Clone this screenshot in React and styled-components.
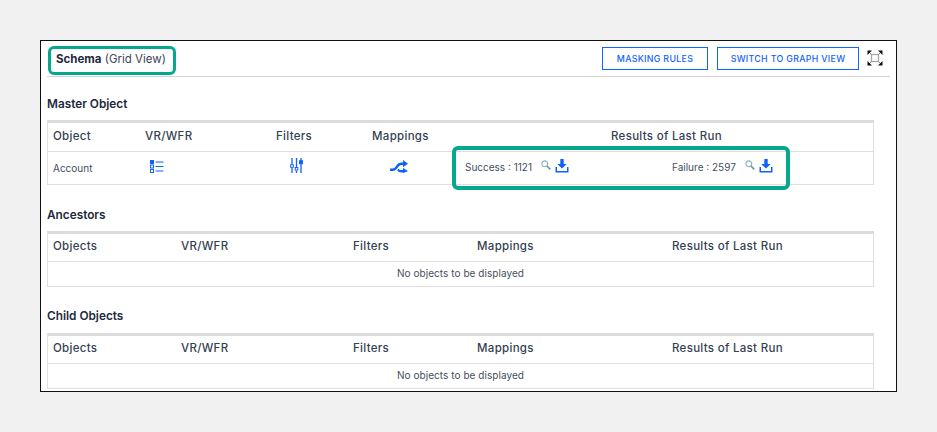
import React from "react";
import styled, { createGlobalStyle } from "styled-components";

const GlobalStyle = createGlobalStyle`
  html, body {
    margin: 0;
    padding: 0;
    background: #f1f1f1;
    font-family: "Inter", "Liberation Sans", sans-serif;
  }
`;

const Page = styled.div`
  width: 937px;
  height: 432px;
  padding: 40px 40px 0;
  box-sizing: border-box;
`;

const Frame = styled.div`
  position: relative;
  width: 857px;
  height: 352px;
  box-sizing: border-box;
  background: #fff;
  border: 1px solid #111;
  padding: 0 6px;
`;

const Header = styled.div`
  display: flex;
  align-items: center;
  justify-content: space-between;
  height: 36px;
  box-sizing: border-box;
  border-bottom: 1px solid #d4d4d4;
`;

const Heading = styled.div`
  font-size: 11.5px;
  font-weight: 400;
  color: #3a4658;
  padding-left: 9px;
  padding-top: 1px;
  b {
    font-weight: 700;
    color: #1e2a3c;
  }
`;

const Actions = styled.div`
  display: flex;
  align-items: center;
  margin-right: 7px;
  margin-bottom: 1px;
`;

const OutlineButton = styled.button`
  height: 23px;
  width: ${({ $w }) => $w}px;
  margin-right: ${({ $mr }) => $mr}px;
  padding: 0;
  border: 1px solid #0f62fe;
  background: #fff;
  color: #0f62fe;
  font-family: inherit;
  font-size: 8.8px;
  font-weight: 500;
  letter-spacing: 0.33px;
  white-space: nowrap;
`;

const SectionTitle = styled.h3`
  margin: 0;
  padding-top: ${({ $top }) => $top}px;
  height: 15px;
  line-height: 15px;
  font-size: 11.8px;
  font-weight: 600;
  color: #1e2a3c;
  box-sizing: content-box;
`;

const Table = styled.div`
  width: 827px;
  margin-top: ${({ $top }) => $top}px;
  box-sizing: border-box;
  border: 1px solid #dfdfdf;
  border-top: 3px solid #dcdcdc;
`;

const Row = styled.div`
  display: grid;
  grid-template-columns: ${({ $cols }) => $cols};
  height: ${({ $h }) => $h}px;
  align-items: center;
  box-sizing: border-box;
  border-bottom: ${({ $last }) => ($last ? "none" : "1px solid #dfdfdf")};
`;

const Th = styled.div`
  font-size: 11.5px;
  font-weight: 500;
  color: #333f52;
  letter-spacing: 0.3px;
  padding-left: ${({ $pl }) => $pl || 0}px;
  padding-bottom: 3px;
  white-space: nowrap;
`;

const Td = styled.div`
  font-size: 10px;
  color: #454f5e;
  display: flex;
  align-items: center;
  padding-left: ${({ $pl }) => $pl || 0}px;
  padding-bottom: ${({ $pb }) => $pb || 0}px;
`;

const Empty = styled.div`
  height: 24px;
  line-height: 23px;
  text-align: center;
  font-size: 10px;
  letter-spacing: 0.05px;
  color: #454f5e;
`;

const ResultCell = styled.div`
  display: grid;
  grid-template-columns: 207px 1fr;
  padding-left: 12px;
  padding-bottom: 3px;
`;

const Stat = styled.div`
  display: flex;
  align-items: center;
  font-size: 10px;
  color: #454f5e;
  white-space: nowrap;
  svg:first-of-type {
    margin-left: 9px;
    margin-top: -4px;
  }
  svg:last-of-type {
    margin-left: 4px;
    margin-top: -1px;
  }
`;

const Callout = styled.div`
  position: absolute;
  left: ${({ $x }) => $x}px;
  top: ${({ $y }) => $y}px;
  width: ${({ $w }) => $w}px;
  height: ${({ $h }) => $h}px;
  box-sizing: border-box;
  border: ${({ $b }) => $b}px solid #05a88c;
  border-radius: 6px;
  pointer-events: none;
`;

const ExpandIcon = () => (
  <svg width="16" height="16" viewBox="0 0 16 16" fill="none">
    <rect x="4.500" y="4.500" width="7" height="7" stroke="#a8a8a8" strokeWidth="1.300" />
    <path d="M2 2l2.500 2.500M14 2l-2.500 2.500M2 14l2.500-2.500M14 14l-2.500-2.500" stroke="#888" strokeWidth="1" />
    <path d="M0.500 0.500h4.500l-4.500 4.500zM15.500 0.500v4.500l-4.500-4.500zM0.500 15.500v-4.500l4.500 4.500zM15.500 15.500h-4.500l4.500-4.500z" fill="#111" />
  </svg>
);

const ListIcon = () => (
  <svg width="14" height="13" viewBox="0 0 14 13" fill="none" stroke="#0f62fe">
    <rect x="0.500" y="0.500" width="3" height="3" fill="#0f62fe" />
    <rect x="0.500" y="5" width="3" height="3" />
    <rect x="0.500" y="9.500" width="3" height="3" />
    <path d="M5.500 2h8M5.500 6.500h8M5.500 11h8" strokeWidth="1.200" />
  </svg>
);

const SlidersIcon = () => (
  <svg width="13" height="15" viewBox="0 0 13 15" fill="none" stroke="#0f62fe" strokeWidth="1.300">
    <path d="M2 0v6M2 10v5M6.500 0v9M6.500 13v2M11 0v2M11 6v9" />
    <rect x="0.700" y="6.700" width="2.600" height="2.600" strokeWidth="1" />
    <rect x="5.200" y="9.500" width="2.600" height="2.600" strokeWidth="1" />
    <rect x="9.500" y="2.700" width="3" height="3" fill="#0f62fe" strokeWidth="1" />
  </svg>
);

const ShuffleIcon = () => (
  <svg width="19" height="13" viewBox="0 0 19 13" fill="#0f62fe">
    <path d="M0 8.500h2.500c1.500 0 2.300-.8 3.300-2.200C7.300 4 8.800 2.500 11.500 2.500H13V0l5 3.700-5 3.600V5h-1.500c-1.600 0-2.500.9-3.600 2.600C6.500 9.800 5 11 2.500 11H0z" />
    <path d="M8.500 8.700c.8.900 1.700 1.300 3 1.300H13V7.700l5 3.600-5 1.700v-.5h-1.500c-2 0-3.300-.8-4.300-2z" />
  </svg>
);

const SearchIcon = () => (
  <svg width="10" height="10" viewBox="0 0 10 10" fill="none">
    <circle cx="3.800" cy="3.800" r="2.900" stroke="#8fb2c4" strokeWidth="1.200" />
    <path d="M6 6l3.300 3.300" stroke="#6f93a8" strokeWidth="1.700" />
  </svg>
);

const DownloadIcon = () => (
  <svg width="14" height="14" viewBox="0 0 14 14" fill="#0f62fe">
    <path d="M5.300 0h3.400v5h3L7 9.600 2.300 5h3z" />
    <path d="M0.500 8v5.500h13V8H12v4H2V8z" />
  </svg>
);

const masterHeadCols = "97px 131px 96px 239px 1fr";
const masterBodyCols = "97px 131px 96px 81px 1fr";
const gridCols = "133px 172px 124px 195px 1fr";

const EmptyTable = ({ top }) => (
  <Table $top={top}>
    <Row $cols={gridCols} $h={28}>
      <Th $pl={5}>Objects</Th>
      <Th>VR/WFR</Th>
      <Th>Filters</Th>
      <Th>Mappings</Th>
      <Th>Results of Last Run</Th>
    </Row>
    <Empty>No objects to be displayed</Empty>
  </Table>
);

export default function App() {
  return (
    <Page>
      <GlobalStyle />
      <Frame>
        <Header>
          <Heading>
            <b>Schema</b> (Grid View)
          </Heading>
          <Actions>
            <OutlineButton $w={106} $mr={9}>MASKING RULES</OutlineButton>
            <OutlineButton $w={142} $mr={8}>SWITCH TO GRAPH VIEW</OutlineButton>
            <ExpandIcon />
          </Actions>
        </Header>

        <SectionTitle $top={20}>Master Object</SectionTitle>
        <Table $top={8}>
          <Row $cols={masterHeadCols} $h={29}>
            <Th $pl={5}>Object</Th>
            <Th>VR/WFR</Th>
            <Th>Filters</Th>
            <Th>Mappings</Th>
            <Th>Results of Last Run</Th>
          </Row>
          <Row $cols={masterBodyCols} $h={32} $last>
            <Td $pl={5} $pb={1}>Account</Td>
            <Td $pl={5} $pb={3}><ListIcon /></Td>
            <Td $pl={14} $pb={5}><SlidersIcon /></Td>
            <Td $pl={18} $pb={4}><ShuffleIcon /></Td>
            <ResultCell>
              <Stat>Success : 1121<SearchIcon /><DownloadIcon /></Stat>
              <Stat>Failure : 2597<SearchIcon /><DownloadIcon /></Stat>
            </ResultCell>
          </Row>
        </Table>

        <SectionTitle $top={23}>Ancestors</SectionTitle>
        <EmptyTable top={8} />

        <SectionTitle $top={22}>Child Objects</SectionTitle>
        <EmptyTable top={9} />

        <Callout $x={7} $y={5} $w={128} $h={29} $b={3} />
        <Callout $x={411} $y={105} $w={338} $h={44} $b={4} />
      </Frame>
    </Page>
  );
}
